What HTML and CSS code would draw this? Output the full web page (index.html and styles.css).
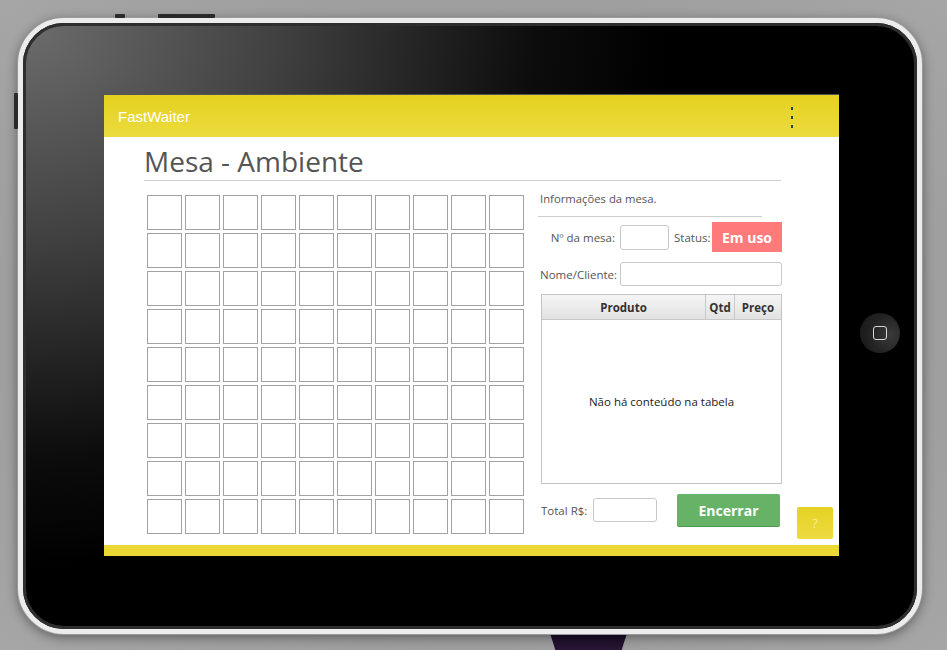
FILE: index.html
```html
<!DOCTYPE html>
<html lang="pt">
<head>
<meta charset="utf-8">
<title>FastWaiter - Mesa</title>
<link rel="stylesheet" href="styles.css">
</head>
<body>
<div class="stage">
  <div class="stand"></div>
  <div class="tablet">
    <span class="hw-btn hw-top1"></span>
    <span class="hw-btn hw-top2"></span>
    <span class="hw-btn hw-side"></span>
    <div class="bezel">
      <div class="app">
        <header class="appbar">
          <span class="brand">FastWaiter</span>
          <span class="kebab"><i></i><i></i><i></i></span>
        </header>
        <div class="content">
          <h1 class="title">Mesa - Ambiente</h1>
          <div class="main">
            <div class="tables-grid">
              <div class="cell"></div><div class="cell"></div><div class="cell"></div><div class="cell"></div><div class="cell"></div><div class="cell"></div><div class="cell"></div><div class="cell"></div><div class="cell"></div><div class="cell"></div>
              <div class="cell"></div><div class="cell"></div><div class="cell"></div><div class="cell"></div><div class="cell"></div><div class="cell"></div><div class="cell"></div><div class="cell"></div><div class="cell"></div><div class="cell"></div>
              <div class="cell"></div><div class="cell"></div><div class="cell"></div><div class="cell"></div><div class="cell"></div><div class="cell"></div><div class="cell"></div><div class="cell"></div><div class="cell"></div><div class="cell"></div>
              <div class="cell"></div><div class="cell"></div><div class="cell"></div><div class="cell"></div><div class="cell"></div><div class="cell"></div><div class="cell"></div><div class="cell"></div><div class="cell"></div><div class="cell"></div>
              <div class="cell"></div><div class="cell"></div><div class="cell"></div><div class="cell"></div><div class="cell"></div><div class="cell"></div><div class="cell"></div><div class="cell"></div><div class="cell"></div><div class="cell"></div>
              <div class="cell"></div><div class="cell"></div><div class="cell"></div><div class="cell"></div><div class="cell"></div><div class="cell"></div><div class="cell"></div><div class="cell"></div><div class="cell"></div><div class="cell"></div>
              <div class="cell"></div><div class="cell"></div><div class="cell"></div><div class="cell"></div><div class="cell"></div><div class="cell"></div><div class="cell"></div><div class="cell"></div><div class="cell"></div><div class="cell"></div>
              <div class="cell"></div><div class="cell"></div><div class="cell"></div><div class="cell"></div><div class="cell"></div><div class="cell"></div><div class="cell"></div><div class="cell"></div><div class="cell"></div><div class="cell"></div>
              <div class="cell"></div><div class="cell"></div><div class="cell"></div><div class="cell"></div><div class="cell"></div><div class="cell"></div><div class="cell"></div><div class="cell"></div><div class="cell"></div><div class="cell"></div>
            </div>
            <aside class="info">
              <div class="info-head">Informações da mesa.</div>
              <div class="row row-mesa">
                <span class="lbl lbl-mesa">Nº da mesa:</span>
                <span class="field field-mesa"></span>
                <span class="lbl lbl-status">Status:</span>
                <span class="badge">Em uso</span>
              </div>
              <div class="row row-nome">
                <span class="lbl lbl-nome">Nome/Cliente:</span>
                <span class="field field-nome"></span>
              </div>
              <div class="grid-table">
                <div class="th th-prod">Produto</div>
                <div class="th th-qtd">Qtd</div>
                <div class="th th-preco">Preço</div>
                <div class="empty">Não há conteúdo na tabela</div>
              </div>
              <div class="row row-total">
                <span class="lbl lbl-total">Total R$:</span>
                <span class="field field-total"></span>
                <button class="btn-encerrar">Encerrar</button>
              </div>
            </aside>
          </div>
        </div>
        <button class="help">?</button>
        <footer class="appfoot"></footer>
      </div>
      <div class="home"><span class="home-icon"></span></div>
    </div>
  </div>
</div>
</body>
</html>
```
FILE: styles.css
```css
* { box-sizing: border-box; }
html, body { margin: 0; padding: 0; }
body {
  background: #a1a1a1;
  font-family: "Open Sans", "Liberation Sans", sans-serif;
}
.stage {
  position: relative;
  width: 947px;
  height: 650px;
  overflow: hidden;
  padding: 18px 0 0 18px;
  background: radial-gradient(ellipse at 50% 50%, #8c8c8c 0%, #9c9c9c 60%, #a6a6a6 100%);
}
.stand {
  position: absolute;
  left: 549px;
  top: 630px;
  width: 79px;
  height: 20px;
  background: linear-gradient(180deg, #140a1e, #2a1636);
  clip-path: polygon(0 0, 100% 0, 92% 100%, 8% 100%);
}
.tablet {
  position: relative;
  width: 904px;
  height: 616px;
  border: 5px solid #ececec;
  border-radius: 46px;
  background: #000;
  box-shadow: 0 0 0 1px #9a9a9a, 0 3px 12px rgba(0,0,0,0.45);
}
.hw-btn {
  position: absolute;
  background: #2a2a2a;
  border-radius: 1px;
}
.hw-top1 { left: 92px; top: -9px; width: 10px; height: 4px; }
.hw-top2 { left: 135px; top: -9px; width: 57px; height: 4px; }
.hw-side { left: -9px; top: 70px; width: 4px; height: 36px; }
.bezel {
  display: flex;
  align-items: flex-start;
  width: 100%;
  height: 100%;
  padding: 69px 0 0 78px;
  border: 3px solid #2e2e2e;
  border-radius: 41px;
  background: radial-gradient(ellipse 640px 540px at 0 0, #6c6c6c 0%, #404040 40%, #0c0c0c 80%, #000 100%);
}
.app {
  position: relative;
  display: flex;
  flex-direction: column;
  width: 735px;
  height: 461px;
  background: #fff;
  box-shadow: 0 -1px 0 #555;
}
.appbar {
  display: flex;
  align-items: center;
  justify-content: space-between;
  height: 42px;
  padding: 0 46px 0 14px;
  background: linear-gradient(180deg, #e5d11f 0%, #ecdb40 100%);
}
.brand {
  font-family: "Liberation Sans", Arial, sans-serif;
  font-size: 15px;
  color: #fff;
}
.kebab {
  display: flex;
  flex-direction: column;
  gap: 6px;
  padding-top: 2px;
}
.kebab i {
  display: block;
  width: 2px;
  height: 3px;
  background: #1d4a3e;
}
.content {
  flex: 1;
  padding: 0 58px 0 40px;
}
.title {
  margin: 0;
  padding-top: 5px;
  height: 44px;
  line-height: 38px;
  font-weight: 400;
  font-size: 28px;
  color: #555;
  border-bottom: 1px solid #cfcfcf;
}
.main {
  display: flex;
  align-items: flex-start;
  margin-top: 14px;
}
.tables-grid {
  display: grid;
  grid-template-columns: repeat(10, 35px);
  grid-auto-rows: 35px;
  gap: 3px;
  margin-left: 3px;
}
.cell {
  border: 1px solid #a2a2a2;
  background: #fff;
}
.info {
  width: 244px;
  margin-left: 14px;
  margin-top: -4px;
  font-size: 11.5px;
  color: #555;
}
.info-head {
  width: 224px;
  line-height: 16px;
  padding: 0 0 9px 2px;
  font-size: 11.3px;
  border-bottom: 1px solid #cfcfcf;
}
.row {
  display: flex;
  align-items: center;
}
.row-mesa { height: 30px; margin-top: 5px; }
.lbl { white-space: nowrap; }
.lbl-mesa { width: 77px; text-align: right; }
.field {
  display: block;
  border: 1px solid #c8c8c8;
  border-radius: 3px;
  background: #fff;
}
.field-mesa { width: 49px; height: 25px; margin-left: 5px; }
.lbl-status { margin-left: 5px; width: 35px; }
.badge {
  display: flex;
  align-items: center;
  justify-content: center;
  width: 70px;
  height: 30px;
  margin-left: 3px;
  background: #ff7b7b;
  color: #fff;
  font-weight: 700;
  font-size: 14px;
}
.row-nome { height: 24px; margin-top: 10px; }
.lbl-nome { width: 82px; padding-left: 2px; }
.field-nome { width: 162px; height: 24px; }
.grid-table {
  display: grid;
  grid-template-columns: 164px 29px 1fr;
  grid-template-rows: 25px 1fr;
  width: 241px;
  height: 190px;
  margin: 8px 0 0 3px;
  border: 1px solid #c4c4c4;
}
.th {
  display: flex;
  align-items: center;
  justify-content: center;
  background: linear-gradient(180deg, #f5f5f5 0%, #e2e2e2 100%);
  border-bottom: 1px solid #c8c8c8;
  font-weight: 700;
  font-size: 11.5px;
  color: #333;
}
.th-prod, .th-qtd { border-right: 1px solid #c8c8c8; }
.empty {
  grid-column: 1 / -1;
  display: flex;
  align-items: center;
  justify-content: center;
  font-size: 11.5px;
  color: #222;
}
.row-total { height: 32px; margin-top: 10px; }
.lbl-total { width: 52px; margin-left: 3px; }
.field-total { width: 64px; height: 24px; }
.btn-encerrar {
  width: 103px;
  height: 32px;
  margin-left: 20px;
  border: 0;
  border-radius: 2px;
  background: #66b266;
  box-shadow: 0 1px 0 #4e9a4e;
  color: #fff;
  font-family: "Open Sans", "Liberation Sans", sans-serif;
  font-weight: 700;
  font-size: 14px;
  padding: 0;
}
.help {
  position: absolute;
  left: 693px;
  top: 412px;
  width: 36px;
  height: 32px;
  border: 0;
  border-radius: 2px;
  padding: 0;
  background: linear-gradient(180deg, #e6d223, #ecdb40);
  color: #f3eea0;
  font-family: "Open Sans", "Liberation Sans", sans-serif;
  font-size: 13px;
}
.appfoot {
  height: 11px;
  background: #ebd834;
}
.home {
  display: flex;
  align-items: center;
  justify-content: center;
  width: 40px;
  height: 40px;
  margin: 218px 0 0 21px;
  border-radius: 50%;
  background: radial-gradient(circle at 75% 55%, #3a3a3a 0%, #222 55%, #151515 100%);
}
.home-icon {
  display: block;
  width: 14px;
  height: 14px;
  border: 1.5px solid #d8d8d8;
  border-radius: 3px;
}
```
